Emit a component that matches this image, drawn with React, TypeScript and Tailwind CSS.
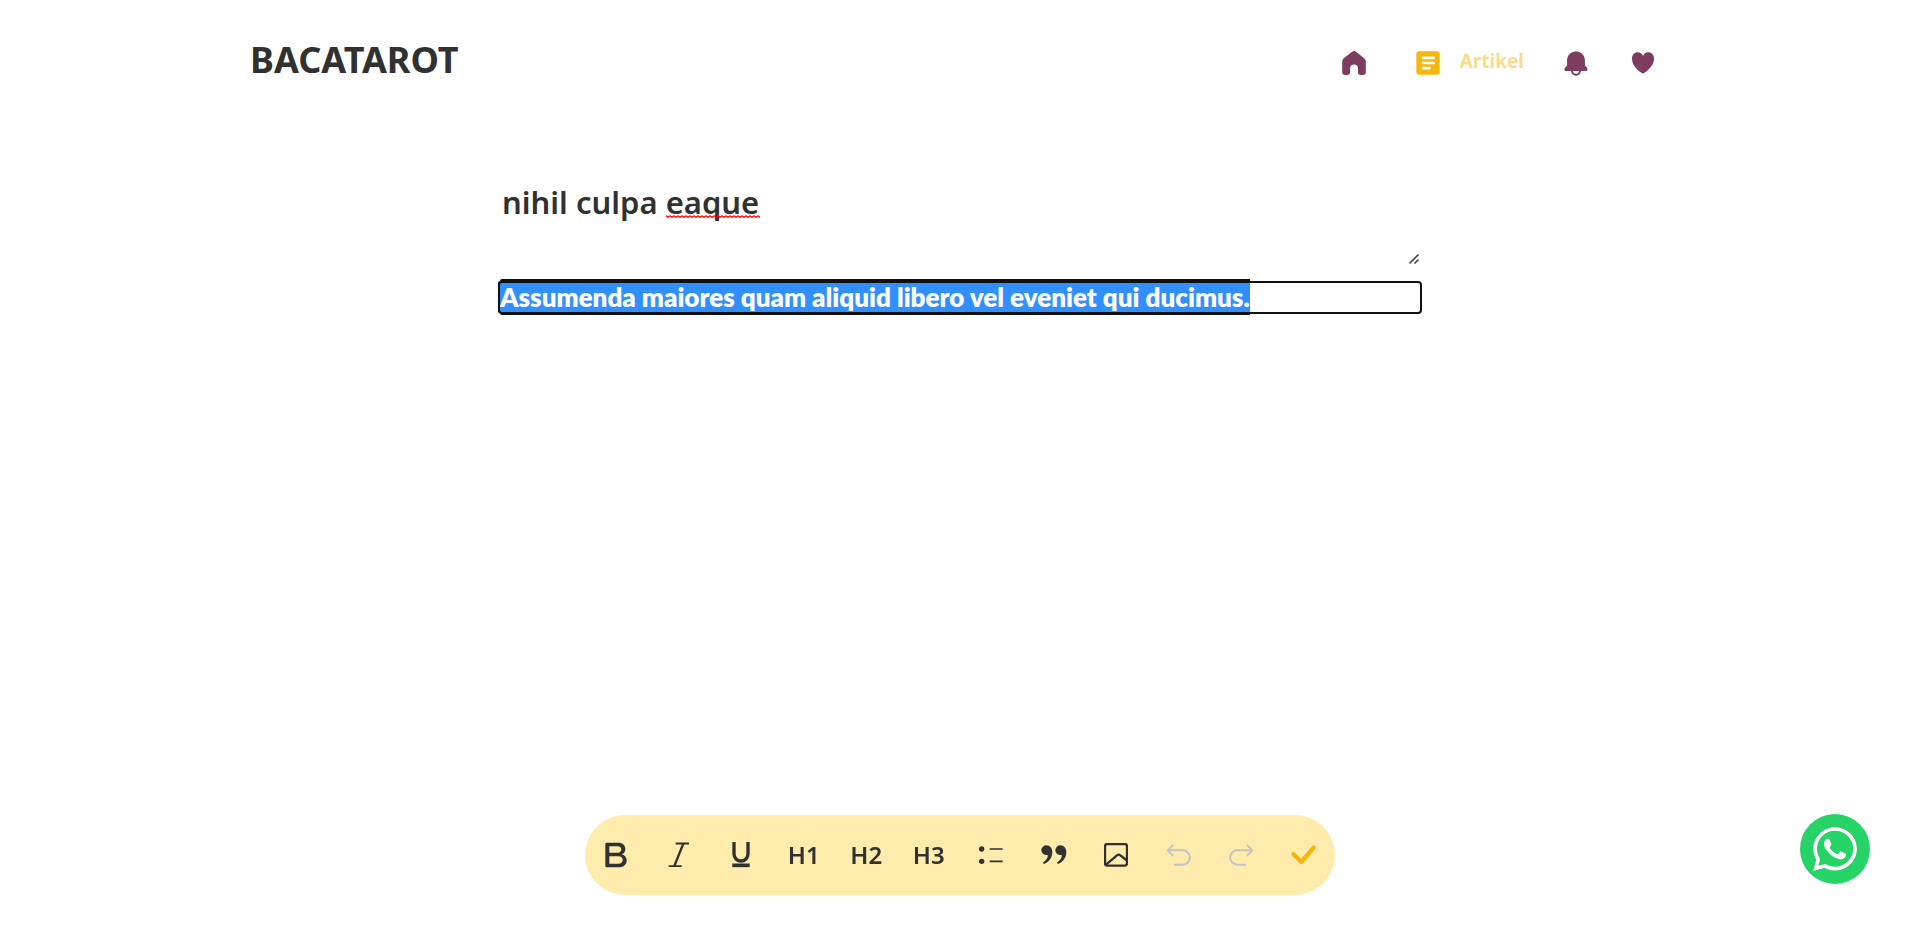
import type { ReactNode } from 'react';
import { FaWhatsapp } from 'react-icons/fa';

const headingFont = "font-['Noto_Sans',sans-serif]";

type IconProps = { box: string; className: string; children: ReactNode };

function Icon({ box, className, children }: IconProps) {
  return (
    <svg viewBox={box} className={className} fill="none" strokeLinecap="round" strokeLinejoin="round" aria-hidden="true">
      {children}
    </svg>
  );
}

function HomeIcon() {
  return (
    <Icon box="66 64 72 73" className="size-6">
      <path fill="currentColor" d="M96 66q6-4 12 0L134 87q4 4 4 9V128q0 9-9 9H122q-8 0-8-9V117a12 12 0 0 0-24 0V128q0 9-9 9H75q-9 0-9-9V96q0-5 4-9z" />
    </Icon>
  );
}

function ArticleIcon() {
  return (
    <Icon box="287 62 71 71" className="size-6">
      <rect x="288" y="63" width="69" height="69" rx="7" fill="currentColor" />
      <path d="M308 82.500H339M308 97.500H339M308 112.500H327" stroke="#fff" strokeWidth="8" />
    </Icon>
  );
}

function BellIcon() {
  return (
    <Icon box="732 62 72 76" className="h-[25px] w-6">
      <path fill="currentColor" d="M762 64q6-3 12 0C788 67 795 78 795 90V105L801 112q3 4 1.500 8q-1 3-5 3H738q-4 0-5-3q-1.500-4 2-8L741 105V90C741 78 748 67 762 64z" />
      <path stroke="currentColor" strokeWidth="6" d="M756 122a12 12 0 0 0 24 0" />
    </Icon>
  );
}

function HeartIcon() {
  return (
    <Icon box="933 64 72 72" className="size-6">
      <path fill="currentColor" d="M969 132C955 123 936 108 936 87C936 75 944 68 953 68C961 68 966 72 969 79C972 72 977 68 985 68C994 68 1002 75 1002 87C1002 108 983 123 969 132z" />
    </Icon>
  );
}

function QuoteMark({ d }: { d: string }) {
  return <path fill="currentColor" d={d} />;
}

const tools: { label: string; content: ReactNode; disabled?: boolean }[] = [
  {
    label: 'Bold',
    content: (
      <Icon box="104 130 72 72" className="size-6 overflow-visible">
        <path
          fill="currentColor"
          fillRule="evenodd"
          d="M112 129H147C160 129 168 137 168 148C168 156 164 162 157 164C166 166 172 173 172 182C172 195 163 203 149 203H112q-4 0-4-4V133q0-4 4-4zM120 140V159H145C152 159 156 155 156 149.500C156 144 152 140 145 140zM120 170V192H147C155 192 160 188 160 181C160 174 155 170 147 170z"
        />
      </Icon>
    ),
  },
  {
    label: 'Italic',
    content: (
      <Icon box="293 130 72 72" className="size-6 overflow-visible">
        <path stroke="currentColor" strokeWidth="5.500" strokeLinecap="butt" d="M319 131.500H359M298 199.500H337" />
        <path stroke="currentColor" strokeWidth="7" strokeLinecap="butt" d="M342 132L315 199" />
      </Icon>
    ),
  },
  {
    label: 'Underline',
    content: (
      <Icon box="479 130 72 72" className="size-6 overflow-visible">
        <path stroke="currentColor" strokeWidth="10" strokeLinecap="butt" d="M494 127V163a21 21 0 0 0 42 0V127" />
        <path stroke="currentColor" strokeWidth="11" strokeLinecap="butt" d="M489 197H541" />
      </Icon>
    ),
  },
  { label: 'Heading 1', content: 'H1' },
  { label: 'Heading 2', content: 'H2' },
  { label: 'Heading 3', content: 'H3' },
  {
    label: 'Bulleted list',
    content: (
      <Icon box="89 130 72 72" className="size-6">
        <circle cx="97" cy="148" r="8" fill="currentColor" />
        <circle cx="97" cy="185" r="8" fill="currentColor" />
        <path stroke="currentColor" strokeWidth="5" strokeLinecap="butt" d="M121 148H160M121 185H160" />
      </Icon>
    ),
  },
  {
    label: 'Quote',
    content: (
      <Icon box="275 130 72 72" className="size-6 overflow-visible">
        <QuoteMark d="M288 137c11 0 18 9 18 21c0 15-9 28-23 34q-4 1-5-2c0-3 8-6 13-16q2-5 1-9c-1 1-3 1-5 1a14.500 14.500 0 0 1 1-29z" />
        <QuoteMark d="M330 137c11 0 18 9 18 21c0 15-9 28-23 34q-4 1-5-2c0-3 8-6 13-16q2-5 1-9c-1 1-3 1-5 1a14.500 14.500 0 0 1 1-29z" />
      </Icon>
    ),
  },
  {
    label: 'Image',
    content: (
      <Icon box="462 130 72 72" className="size-6">
        <rect x="465" y="133" width="66" height="65" rx="7" stroke="currentColor" strokeWidth="7" />
        <path stroke="currentColor" strokeWidth="7" d="M468 195L501 167q5-4 10 0L529 181" />
      </Icon>
    ),
  },
  {
    label: 'Undo',
    disabled: true,
    content: (
      <Icon box="650 130 72 72" className="size-6 overflow-visible">
        <path stroke="currentColor" strokeWidth="6" d="M667 137L652 152L667 167M652 152H697a21.500 21.500 0 0 1 0 43H674" />
      </Icon>
    ),
  },
  {
    label: 'Redo',
    disabled: true,
    content: (
      <Icon box="837 130 72 72" className="size-6 overflow-visible">
        <path stroke="currentColor" strokeWidth="6" d="M892 137L907 152L892 167M907 152H862a21.500 21.500 0 0 0 0 43H885" />
      </Icon>
    ),
  },
  {
    label: 'Save',
    content: (
      <Icon box="1025 130 72 72" className="size-6 overflow-visible text-[#f4b70a]">
        <path stroke="currentColor" strokeWidth="13" d="M1029 163L1053 187L1090 144" />
      </Icon>
    ),
  },
];

export default function App() {
  return (
    <div className={`min-h-screen bg-white text-[#303131] ${headingFont}`}>
      <header className="mx-auto flex h-[122px] max-w-[1420px] items-center justify-between pr-[15px]">
        <a href="#home" className="pb-0.5 text-[36px] leading-none font-bold">BACATAROT</a>
        <nav className="flex items-center gap-10 pt-1 text-[#7d3c60]">
          <a href="#home" aria-label="Home" className="pr-2.5"><HomeIcon /></a>
          <a href="#artikel" className="flex items-center gap-5 text-[#f4b70a]">
            <ArticleIcon />
            <span className="pb-1 text-[19px] leading-6 font-bold text-[#f9dc8b]">Artikel</span>
          </a>
          <button type="button" aria-label="Notifications" className="mr-[3px]"><BellIcon /></button>
          <button type="button" aria-label="Favorites"><HeartIcon /></button>
        </nav>
      </header>

      <main className="mx-auto max-w-[920px] pt-[50px]">
        <div className="relative">
          <textarea
            aria-label="Title"
            rows={2}
            spellCheck={false}
            defaultValue="nihil culpa eaque"
            className="block h-[94px] w-full resize-y bg-transparent px-0.5 pt-2 text-[31px] leading-[44px] font-semibold outline-none"
          />
          <svg className="pointer-events-none absolute top-[43px] left-[166px] h-[3px] w-[94px]" aria-hidden="true">
            <defs>
              <pattern id="squiggle" width="4" height="3" patternUnits="userSpaceOnUse">
                <path d="M0 .700L2 2.300L4 .700" fill="none" stroke="#f00" strokeWidth="1.300" />
              </pattern>
            </defs>
            <rect width="100%" height="100%" fill="url(#squiggle)" />
          </svg>
          <svg viewBox="0 0 15 15" className="pointer-events-none absolute right-0 bottom-0 size-[15px] bg-white" aria-hidden="true">
            <path d="M4.500 12.500L13.500 3.500M9.500 12.500L13.500 8.500" stroke="#404040" strokeWidth="1.600" />
          </svg>
        </div>
        <div
          role="textbox"
          aria-label="Article body"
          aria-multiline="true"
          contentEditable
          suppressContentEditableWarning
          spellCheck={false}
          className="mt-[17px] flex h-[29px] items-start rounded-[2px] font-['Lato','Noto_Sans',sans-serif] text-[26px] leading-8 font-extrabold text-white outline-2 outline-[#101010]"
        >
          <span className="-mt-0.5 rounded-l-[2px] bg-[#328fff] whitespace-nowrap shadow-[0_-2px_0_#101010,0_2px_0_#101010,-2px_0_0_#101010]">
            Assumenda maiores quam aliquid libero vel eveniet qui ducimus.
          </span>
        </div>
      </main>

      <div
        role="toolbar"
        aria-label="Formatting"
        className="fixed inset-x-0 bottom-[39px] mx-auto grid h-20 w-full max-w-[750px] grid-cols-12 rounded-full bg-[#ffebab]"
      >
        {tools.map((tool) => (
          <button
            key={tool.label}
            type="button"
            aria-label={tool.label}
            disabled={tool.disabled}
            className="flex items-center justify-center text-[24px] leading-8 font-semibold disabled:text-[#c4c4c4]"
          >
            {tool.content}
          </button>
        ))}
      </div>

      <a
        href="#whatsapp"
        aria-label="WhatsApp"
        className="fixed right-[50px] bottom-[50px] flex size-[70px] items-center justify-center rounded-full bg-[#25d366] text-white"
      >
        <FaWhatsapp className="size-[50px]" />
      </a>
    </div>
  );
}
